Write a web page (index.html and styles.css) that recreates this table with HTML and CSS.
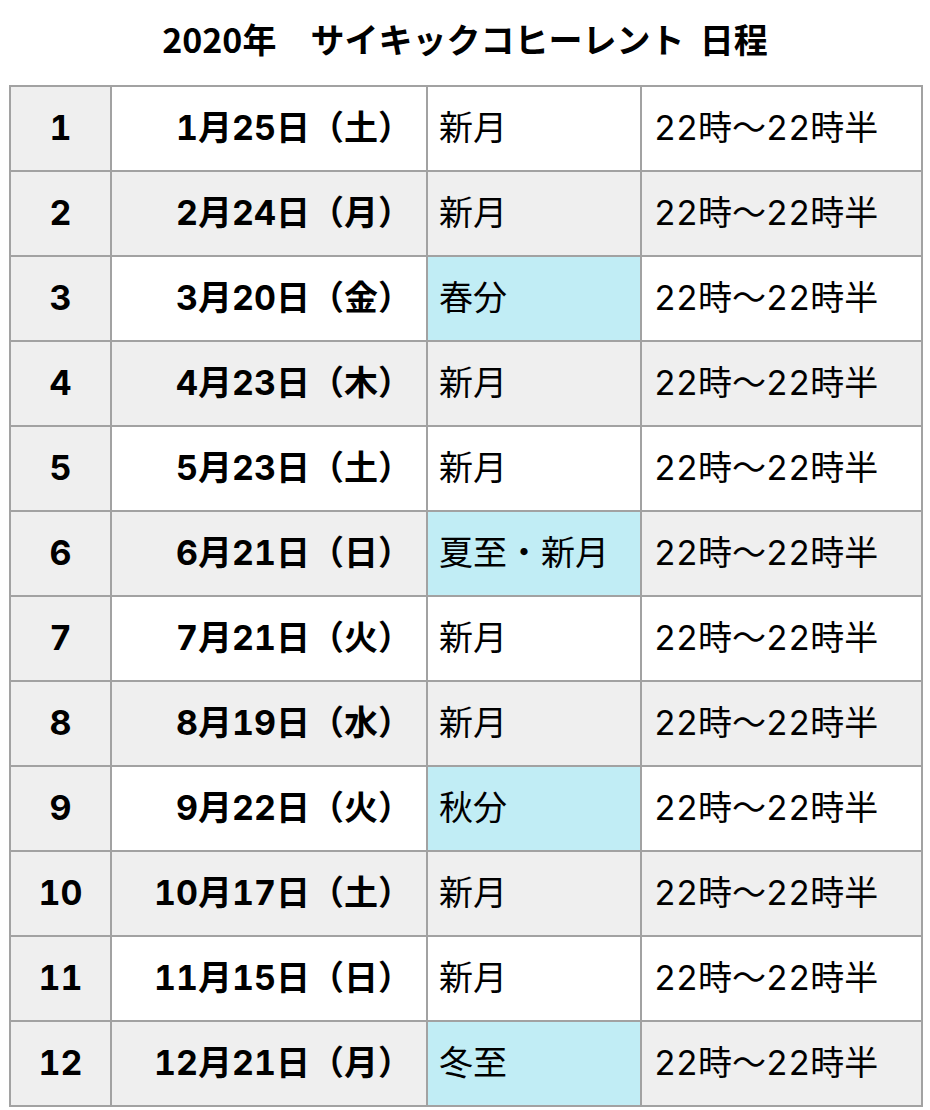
FILE: index.html
```html
<!DOCTYPE html>
<html lang="ja">
<head>
<meta charset="utf-8">
<title>2020年 サイキックコヒーレント 日程</title>
<link rel="stylesheet" href="styles.css">
</head>
<body>
<h1 class="title">2020年　サイキックコヒーレント&nbsp;&nbsp;日程</h1>
<table class="schedule">
  <colgroup>
    <col class="c-no"><col class="c-date"><col class="c-event"><col class="c-time">
  </colgroup>
  <tbody>
    <tr><td class="no">1</td><td class="date">1月25日（土）</td><td class="event">新月</td><td class="time">22時〜22時半</td></tr>
    <tr class="alt"><td class="no">2</td><td class="date">2月24日（月）</td><td class="event">新月</td><td class="time">22時〜22時半</td></tr>
    <tr><td class="no">3</td><td class="date">3月20日（金）</td><td class="event hl">春分</td><td class="time">22時〜22時半</td></tr>
    <tr class="alt"><td class="no">4</td><td class="date">4月23日（木）</td><td class="event">新月</td><td class="time">22時〜22時半</td></tr>
    <tr><td class="no">5</td><td class="date">5月23日（土）</td><td class="event">新月</td><td class="time">22時〜22時半</td></tr>
    <tr class="alt"><td class="no">6</td><td class="date">6月21日（日）</td><td class="event hl">夏至・新月</td><td class="time">22時〜22時半</td></tr>
    <tr><td class="no">7</td><td class="date">7月21日（火）</td><td class="event">新月</td><td class="time">22時〜22時半</td></tr>
    <tr class="alt"><td class="no">8</td><td class="date">8月19日（水）</td><td class="event">新月</td><td class="time">22時〜22時半</td></tr>
    <tr><td class="no">9</td><td class="date">9月22日（火）</td><td class="event hl">秋分</td><td class="time">22時〜22時半</td></tr>
    <tr class="alt"><td class="no">10</td><td class="date">10月17日（土）</td><td class="event">新月</td><td class="time">22時〜22時半</td></tr>
    <tr><td class="no">11</td><td class="date">11月15日（日）</td><td class="event">新月</td><td class="time">22時〜22時半</td></tr>
    <tr class="alt"><td class="no">12</td><td class="date">12月21日（月）</td><td class="event hl">冬至</td><td class="time">22時〜22時半</td></tr>
  </tbody>
</table>
</body>
</html>
```

FILE: styles.css
```css
html, body {
  margin: 0;
  padding: 0;
  background: #ffffff;
}

body {
  font-family: Inter, "Noto Sans CJK JP", sans-serif;
  color: #000000;
  width: 930px;
}

.title {
  margin: 0;
  height: 85px;
  line-height: 78px;
  text-align: center;
  font-family: "Noto Sans CJK JP", sans-serif;
  font-size: 34px;
  font-weight: bold;
  color: #000000;
}

.schedule {
  margin-left: 9px;
  width: 914px;
  border-collapse: collapse;
  border: 2px solid #444444;
  table-layout: fixed;
  font-variant-numeric: tabular-nums;
}

.c-no { width: 101px; }
.c-date { width: 316px; }
.c-event { width: 214px; }
.c-time { width: 281px; }

.schedule td {
  height: 83px;
  padding: 0;
  border: 2px solid #a2a2a2;
  font-size: 34px;
  line-height: 1.2;
  vertical-align: middle;
  white-space: nowrap;
  background: #ffffff;
}

.schedule tr.alt td {
  background: #efefef;
}

.schedule td.no {
  background: #efefef;
  text-align: center;
  font-weight: bold;
}

.schedule td.date {
  text-align: right;
  font-weight: bold;
  padding-right: 14px;
}

.schedule td.event {
  padding-left: 11px;
}

.schedule td.time {
  padding-left: 12px;
}

.schedule td.event.hl,
.schedule tr.alt td.event.hl {
  background: #c1edf5;
}
```
